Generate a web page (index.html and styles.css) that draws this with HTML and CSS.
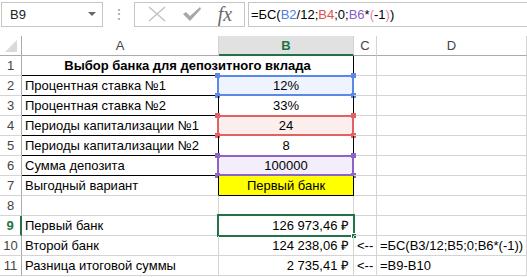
FILE: index.html
```html
<!DOCTYPE html>
<html lang="ru">
<head>
  <meta charset="UTF-8" />
  <title>Выбор банка</title>
  <link rel="stylesheet" href="styles.css">
</head>
<body>
  <div class="formula-bar">
    <div class="name-box"><span>B9</span><span class="caret"></span></div>
    <div class="dots">⋮</div>
    <div class="fx-buttons">
      <svg class="ico" width="20" height="16" viewBox="0 0 20 16"><path d="M2 1 L18 15 M18 1 L2 15" stroke="#c4c4c4" stroke-width="1.6" fill="none"/></svg>
      <svg class="ico" width="20" height="16" viewBox="0 0 20 16"><path d="M1 8 L4 6 L8 10 L18 1 L19 3 L8 15 Z" fill="#a8a8a8"/></svg>
      <span class="fx">fx</span>
    </div>
    <div class="formula">=БС(<span class="c-blue">B2</span>/12;<span class="c-red">B4</span>;0;<span class="c-purple">B6</span>*<span class="c-pink">(</span>-1<span class="c-pink">)</span>)</div>
  </div>

  <div class="sheet">
    <div class="hdr corner"><span class="tri"></span></div>
    <div class="hdr">A</div>
    <div class="hdr hdr-sel">B</div>
    <div class="hdr">C</div>
    <div class="hdr">D</div>

    <div class="rh">1</div>
    <div class="cell title bb br">Выбор банка для депозитного вклада</div>
    <div class="cell"></div>
    <div class="cell"></div>

    <div class="rh">2</div>
    <div class="cell bb br">Процентная ставка №1</div>
    <div class="cell mid bb br"><span class="range blue"><i></i><i></i><i></i><i></i></span><span class="val">12%</span></div>
    <div class="cell"></div>
    <div class="cell"></div>

    <div class="rh">3</div>
    <div class="cell bb br">Процентная ставка №2</div>
    <div class="cell mid bb br">33%</div>
    <div class="cell"></div>
    <div class="cell"></div>

    <div class="rh">4</div>
    <div class="cell bb br">Периоды капитализации №1</div>
    <div class="cell mid bb br"><span class="range red"><i></i><i></i><i></i><i></i></span><span class="val">24</span></div>
    <div class="cell"></div>
    <div class="cell"></div>

    <div class="rh">5</div>
    <div class="cell bb br">Периоды капитализации №2</div>
    <div class="cell mid bb br">8</div>
    <div class="cell"></div>
    <div class="cell"></div>

    <div class="rh">6</div>
    <div class="cell bb br">Сумма депозита</div>
    <div class="cell mid bb br"><span class="range purple"><i></i><i></i><i></i><i></i></span><span class="val">100000</span></div>
    <div class="cell"></div>
    <div class="cell"></div>

    <div class="rh">7</div>
    <div class="cell br">Выгодный вариант</div>
    <div class="cell mid bb br yellow">Первый банк</div>
    <div class="cell"></div>
    <div class="cell"></div>

    <div class="rh">8</div>
    <div class="cell"></div>
    <div class="cell"></div>
    <div class="cell"></div>
    <div class="cell"></div>

    <div class="rh rh-sel">9</div>
    <div class="cell">Первый банк</div>
    <div class="cell num"><span class="selection"><i></i></span><span class="val">126 973,46 ₽</span></div>
    <div class="cell"></div>
    <div class="cell"></div>

    <div class="rh">10</div>
    <div class="cell">Второй банк</div>
    <div class="cell num">124 238,06 ₽</div>
    <div class="cell">&lt;--</div>
    <div class="cell">=БС(B3/12;B5;0;B6*(-1))</div>

    <div class="rh">11</div>
    <div class="cell">Разница итоговой суммы</div>
    <div class="cell num">2 735,41 ₽</div>
    <div class="cell">&lt;--</div>
    <div class="cell">=B9-B10</div>
  </div>
</body>
</html>
```

FILE: styles.css
```css
* { box-sizing: border-box; }
body {
  margin: 0;
  background: white;
  font-family: 'Liberation Sans', Arial, sans-serif;
  font-size: 13px;
  color: #000;
  overflow: hidden;
}

/* formula bar */
.formula-bar {
  display: flex;
  align-items: center;
  height: 26px;
  padding-top: 2px;
  margin-bottom: 10px;
}
.name-box {
  margin-left: 1px;
  width: 102px;
  height: 25px;
  border: 1px solid #c6c6c6;
  display: flex;
  align-items: center;
  justify-content: space-between;
  padding: 0 6px 0 8px;
  color: #222;
}
.caret {
  width: 0;
  height: 0;
  border-left: 4px solid transparent;
  border-right: 4px solid transparent;
  border-top: 4px solid #666;
}
.dots {
  width: 31px;
  text-align: center;
  color: #a0a0a0;
  font-size: 14px;
}
.fx-buttons {
  width: 111px;
  height: 25px;
  border: 1px solid #c6c6c6;
  display: flex;
  align-items: center;
  justify-content: space-around;
  padding: 0 4px;
}
.fx {
  font-family: 'Liberation Serif', serif;
  font-style: italic;
  font-size: 20px;
  color: #6a6a6a;
  line-height: 20px;
}
.formula {
  flex: 1;
  margin-left: 3px;
  height: 25px;
  border: 1px solid #c6c6c6;
  border-right: none;
  padding-left: 2px;
  line-height: 23px;
  white-space: nowrap;
}
.c-blue { color: #4f81e0; }
.c-red { color: #e05050; }
.c-purple { color: #8c5cc8; }
.c-pink { color: #e87fb0; }

/* sheet */
.sheet {
  display: grid;
  grid-template-columns: 22px 197px 135px 23px 150px;
  grid-auto-rows: 20px;
}
.hdr {
  text-align: center;
  color: #444;
  line-height: 19px;
  border-right: 1px solid #d4d4d4;
  border-bottom: 1px solid #ababab;
}
.corner {
  position: relative;
  border-right: 1px solid #ababab;
}
.tri {
  position: absolute;
  right: 4px;
  bottom: 3px;
  width: 0;
  height: 0;
  border-left: 12px solid transparent;
  border-bottom: 12px solid #dadada;
}
.hdr-sel {
  background: #e1e1e1;
  color: #217346;
  font-weight: bold;
  border-bottom: 2px solid #217346;
}
.rh {
  text-align: center;
  color: #444;
  line-height: 19px;
  border-right: 1px solid #ababab;
  border-bottom: 1px solid #d4d4d4;
}
.rh-sel {
  color: #217346;
  font-weight: bold;
  border-right: 2px solid #217346;
}
.cell {
  position: relative;
  padding: 0 3px;
  line-height: 19px;
  white-space: nowrap;
  border-right: 1px solid #d4d4d4;
  border-bottom: 1px solid #d4d4d4;
}
.cell .val { position: relative; }
.title {
  grid-column: span 2;
  text-align: center;
  font-weight: bold;
}
.bb { border-bottom-color: #000; }
.br { border-right-color: #000; }
.mid { text-align: center; }
.num { text-align: right; padding-right: 4px; }
.yellow { background: #ffff00; }

/* reference range highlights */
.range {
  position: absolute;
  top: -1px;
  left: -2px;
  right: -1px;
  bottom: -1px;
  border: 2px solid;
}
.range i {
  position: absolute;
  width: 5px;
  height: 5px;
  background: currentColor;
}
.range i:nth-child(1) { left: -4px; top: -4px; }
.range i:nth-child(2) { right: -4px; top: -4px; }
.range i:nth-child(3) { left: -4px; bottom: -4px; }
.range i:nth-child(4) { right: -4px; bottom: -4px; }
.blue { color: #5b8ae6; border-color: #5b8ae6; background: #eef3fd; }
.red { color: #e06262; border-color: #e06262; background: #fdeeee; }
.purple { color: #8c64c8; border-color: #8c64c8; background: #f3eefa; }

.selection {
  position: absolute;
  top: -2px;
  left: -2px;
  right: -2px;
  bottom: -2px;
  border: 2px solid #217346;
}
.selection i {
  position: absolute;
  right: -4px;
  bottom: -4px;
  width: 6px;
  height: 6px;
  background: #217346;
  border: 1px solid white;
}
```
